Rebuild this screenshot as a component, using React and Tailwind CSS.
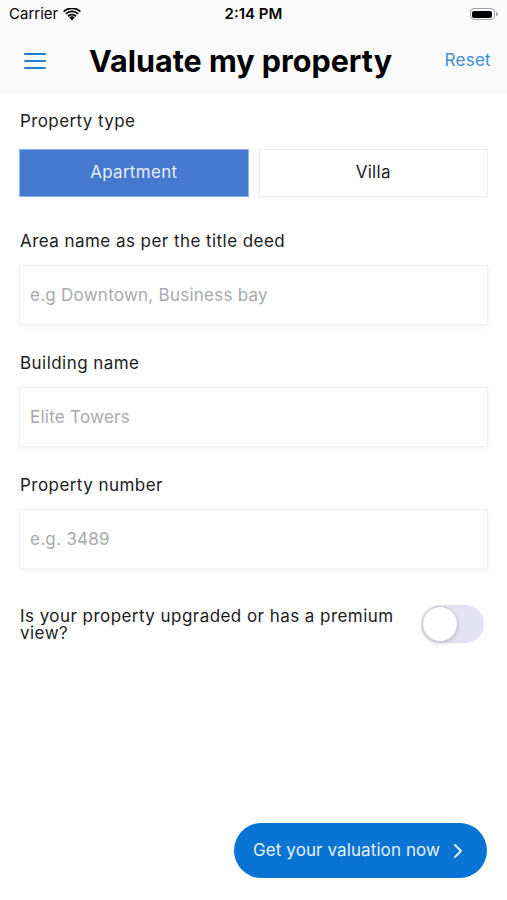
import React, { useState } from "react";

const font = { fontFamily: "Inter, 'Noto Sans', sans-serif" };

function StatusBar() {
  return (
    <div className="flex items-center justify-between h-[28px] px-[9px] text-[15px] text-black">
      <div className="flex items-center gap-[5px] w-[120px]">
        <span>Carrier</span>
        <svg width="18" height="13" viewBox="0 0 18 13">
          <path d="M9 12.5 L6.3 9.6 A4 4 0 0 1 11.7 9.6 Z" fill="black" />
          <path d="M4.4 7.6 A6.6 6.6 0 0 1 13.6 7.6 L12.4 8.9 A4.8 4.8 0 0 0 5.6 8.9 Z" fill="black" />
          <path d="M2.2 5.3 A9.8 9.8 0 0 1 15.8 5.3 L14.6 6.6 A8 8 0 0 0 3.4 6.6 Z" fill="black" />
          <path d="M0 3 A13 13 0 0 1 18 3 L16.8 4.3 A11.2 11.2 0 0 0 1.2 4.3 Z" fill="black" />
        </svg>
      </div>
      <span className="font-semibold">2:14 PM</span>
      <div className="flex items-center justify-end w-[120px]">
        <div className="w-[25px] h-[12px] rounded-[4px] border border-gray-400 p-[1.5px]">
          <div className="w-full h-full rounded-[2px] bg-black" />
        </div>
        <div className="w-[2px] h-[4px] bg-gray-400 rounded-r-sm ml-[1px]" />
      </div>
    </div>
  );
}

function Field({ label, placeholder }) {
  return (
    <div className="flex flex-col">
      <label className="text-[17px] text-[#1c1c1e] leading-[22px] tracking-[0.45px] pl-[1px]">{label}</label>
      <input
        placeholder={placeholder}
        className="mt-[13px] h-[60px] w-full bg-white border border-[#f0f1f3] shadow-[0_2px_6px_rgba(0,0,0,0.05)] px-[10px] text-[17px] tracking-[0.25px] placeholder:text-[#a9a9ad] outline-none"
      />
    </div>
  );
}

export default function App() {
  const [type, setType] = useState("Apartment");
  const [premium, setPremium] = useState(false);

  return (
    <div style={font} className="w-[507px] h-[900px] bg-white flex flex-col">
      <div className="bg-[#fafafa]">
        <StatusBar />
        <div className="flex items-center h-[66px] pl-[24px] pr-[16px]">
          <button className="flex flex-col gap-[5px] w-[22px]">
            <span className="h-[2px] w-full bg-[#1f7fd4] rounded" />
            <span className="h-[2px] w-full bg-[#1f7fd4] rounded" />
            <span className="h-[2px] w-full bg-[#1f7fd4] rounded" />
          </button>
          <h1 className="ml-[43px] flex-1 text-[30.5px] font-bold text-black">Valuate my property</h1>
          <button className="text-[17px] text-[#3a8fd9] tracking-[0.3px]">Reset</button>
        </div>
      </div>

      <div className="flex flex-col px-[19px] pt-[16px]">
        <div className="flex flex-col">
          <span className="text-[17px] text-[#1c1c1e] leading-[22px] pl-[1px] tracking-[0.4px]">Property type</span>
          <div className="mt-[17px] flex gap-[10px]">
            {["Apartment", "Villa"].map((t) =>
              <button
                key={t}
                onClick={() => setType(t)}
                className={
                  type === t
                    ? "flex-1 h-[48px] bg-[#4479cf] text-[#e8effa] text-[17px] tracking-[0.3px] border border-[#8fb3ea]"
                    : "flex-1 h-[48px] bg-white text-[#1c1c1e] text-[17px] tracking-[0.3px] border border-[#eeeff1] shadow-[0_1px_3px_rgba(0,0,0,0.04)]"
                }
              >
                {t}
              </button>
            )}
          </div>
        </div>

        <div className="mt-[33px] flex flex-col gap-[27px]">
          <Field label="Area name as per the title deed" placeholder="e.g Downtown, Business bay" />
          <Field label="Building name" placeholder="Elite Towers" />
          <Field label="Property number" placeholder="e.g. 3489" />
        </div>

        <div className="mt-[36px] flex items-center justify-between">
          <span className="text-[17px] leading-[17px] text-[#1c1c1e] tracking-[0.45px] w-[390px] pl-[1px] pt-[2px]">
            Is your property upgraded or has a premium view?
          </span>
          <button
            onClick={() => setPremium(!premium)}
            className={
              premium
                ? "w-[63px] h-[38px] rounded-full bg-[#1f7fd4] p-[1px] flex justify-end mr-[4px]"
                : "w-[63px] h-[38px] rounded-full bg-[#e4e4f4] p-[1px] flex justify-start mr-[4px]"
            }
          >
            <span className="w-[36px] h-[36px] rounded-full bg-white border border-[#c8c8cc] shadow-[0_2px_4px_rgba(0,0,0,0.15)]" />
          </button>
        </div>
      </div>

      <div className="flex-1" />
      <div className="flex justify-end pr-[20px] pb-[22px]">
        <button className="h-[55px] w-[253px] rounded-full bg-[#0a74d4] text-[#e6f0fb] text-[17px] flex items-center pl-[19px] gap-[13px]">
          <span className="tracking-[0.1px]">Get your valuation now</span>
          <svg width="10" height="16" viewBox="0 0 10 16" fill="none">
            <path d="M2 2 L8 8 L2 14" stroke="#e6f0fb" strokeWidth="2" strokeLinecap="round" strokeLinejoin="round" />
          </svg>
        </button>
      </div>
    </div>
  );
}
